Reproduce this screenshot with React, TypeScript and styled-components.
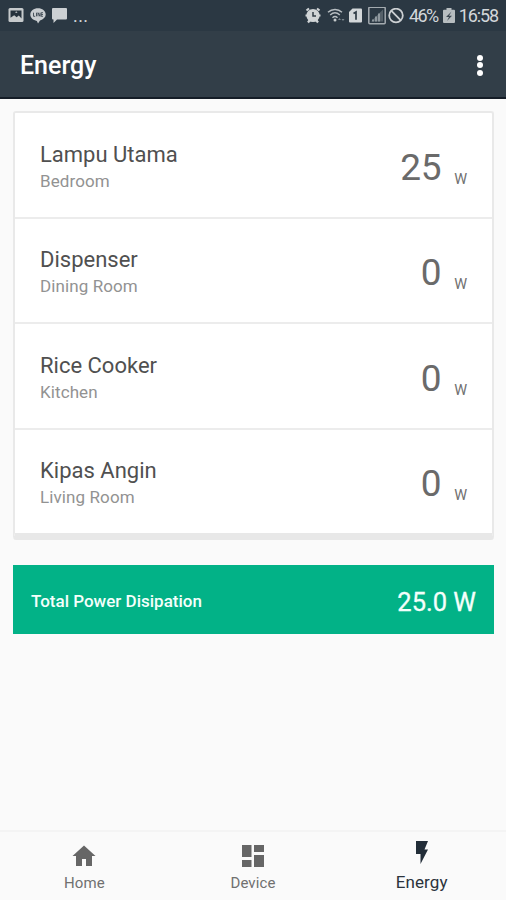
import React from "react";
import styled, { createGlobalStyle } from "styled-components";

const GlobalStyle = createGlobalStyle`
  *, *::before, *::after { box-sizing: border-box; }
  body { margin: 0; font-family: Roboto, "Liberation Sans", sans-serif; background: #fafafa; }
`;

const Screen = styled.div`
  display: flex;
  flex-direction: column;
  width: 506px;
  height: 900px;
  overflow: hidden;
  background: #fafafa;
`;

const StatusBar = styled.div`
  display: flex;
  align-items: center;
  justify-content: space-between;
  height: 31px;
  padding: 0 8px;
  background: #2b3843;
  color: #d3d7da;
`;

const StatusIcon = styled.svg`
  display: block;
  flex: none;
`;

const StatusText = styled.span<{ $spacing: string }>`
  font-size: 18px;
  line-height: 30px;
  letter-spacing: ${(p) => p.$spacing};
  white-space: nowrap;
`;

const AppBar = styled.header`
  display: flex;
  align-items: center;
  justify-content: space-between;
  height: 68px;
  padding: 2px 23px 0 20px;
  background: #323e48;
  border-bottom: 2px solid #151d27;
`;

const Title = styled.h1`
  margin: 0;
  padding-top: 2px;
  font-size: 25px;
  font-weight: 500;
  line-height: 30px;
  color: #fff;
`;

const MenuButton = styled.button`
  display: flex;
  flex-direction: column;
  align-items: center;
  gap: 1.5px;
  padding: 0;
  border: 0;
  background: none;
`;

const Dot = styled.span`
  width: 6px;
  height: 6px;
  border-radius: 50%;
  background: #fff;
`;

const Content = styled.main`
  flex: 1;
  padding: 12px 12px 0 13px;
`;

const Card = styled.section`
  height: 429px;
  border: 2px solid #e9e9e9;
  border-bottom: 7px solid #e8e8e8;
  border-radius: 3px;
  background: #fff;
`;

const Row = styled.div`
  display: flex;
  justify-content: space-between;
  height: 105.5px;
  padding: 27.5px 25px 0;
  border-bottom: 2px solid #ececec;
  &:last-child { height: 103.5px; border-bottom: 0; }
`;

const DeviceName = styled.div`
  font-size: 22px;
  line-height: 28px;
  color: #505050;
`;

const RoomName = styled.div`
  font-size: 17px;
  line-height: 25px;
  letter-spacing: 0.1px;
  color: #929292;
`;

const Reading = styled.div`
  display: flex;
  align-items: baseline;
  gap: 13px;
  color: #6a6a6a;
`;

const Value = styled.span`
  font-size: 37px;
  letter-spacing: -0.4px;
  line-height: 53px;
`;

const Unit = styled.span`
  position: relative;
  top: 4px;
  font-size: 14.5px;
  color: #707070;
`;

const TotalBar = styled.section`
  display: flex;
  align-items: center;
  justify-content: space-between;
  height: 69px;
  margin-top: 25px;
  padding: 2px 18px 0;
  background: #02b287;
  color: #f4fffb;
`;

const TotalLabel = styled.span`
  font-size: 17px;
  font-weight: 500;
`;

const TotalValue = styled.span`
  padding-top: 2px;
  font-size: 25.5px;
  font-weight: 400;
  -webkit-text-stroke: 0.3px #f4fffb;
`;

const NavBar = styled.nav`
  display: grid;
  grid-template-columns: repeat(3, 1fr);
  height: 70px;
  border-top: 2px solid #f4f4f4;
  background: #fafafa;
`;

const NavItem = styled.a<{ $active?: boolean }>`
  display: flex;
  flex-direction: column;
  align-items: center;
  padding-top: ${(p) => (p.$active ? "5px" : "10px")};
  color: ${(p) => (p.$active ? "#2b333c" : "#707070")};
`;

const NavLabel = styled.span<{ $active?: boolean }>`
  margin-top: ${(p) => (p.$active ? "3px" : "1px")};
  font-size: ${(p) => (p.$active ? "17px" : "15px")};
  line-height: 20px;
  letter-spacing: 0.1px;
`;

const StatusGroup = styled.div<{ $gap: string }>`
  display: flex;
  align-items: center;
  gap: ${(p) => p.$gap};
`;

const Spacer = styled.span<{ $w: string }>`
  flex: none;
  width: ${(p) => p.$w};
`;

const readings = [
  { name: "Lampu Utama", room: "Bedroom", value: "25" },
  { name: "Dispenser", room: "Dining Room", value: "0" },
  { name: "Rice Cooker", room: "Kitchen", value: "0" },
  { name: "Kipas Angin", room: "Living Room", value: "0" },
];

function NotificationIcons() {
  return (
    <StatusGroup $gap="6px">
      <StatusIcon width="16" height="16" viewBox="0 0 16 16">
        <rect x=".5" y="0" width="15" height="14" rx="1.5" fill="#c6cacc" />
        <path d="M2.500 2.500h11v8l-2.700-3-2.200 1.800-2.400-2.100-3.700 2.500z" fill="#26323d" />
        <path d="M7 4.500l1.300-1.200L9.600 5z" fill="#c6cacc" />
      </StatusIcon>
      <StatusIcon width="16" height="16" viewBox="0 0 16 16">
        <path d="M8 .2C3.700.2.3 2.900.3 6.600c0 3.200 2.800 5.800 6.600 6.300L8 15.500l2-2.900c3.400-1.100 5.700-3.300 5.700-6C15.700 2.900 12.300.2 8 .2z" fill="#c9cdd0" />
        <path d="M3.500 4.700v3.600h1.700M6.500 4.700v3.600M8 8.300V4.700l2 3.600V4.700M13 4.700h-1.800v3.600H13M11.200 6.500H13" fill="none" stroke="#3b4650" strokeWidth=".9" />
      </StatusIcon>
      <StatusIcon width="15" height="16" viewBox="0 0 15 16">
        <path d="M1 0h13a1 1 0 0 1 1 1v9.500a1 1 0 0 1-1 1H5L1.500 15v-3.500H1a1 1 0 0 1-1-1V1a1 1 0 0 1 1-1z" fill="#ccd0d3" />
      </StatusIcon>
      <StatusText $spacing="0.4px">...</StatusText>
    </StatusGroup>
  );
}

function SystemIcons() {
  return (
    <StatusGroup $gap="0">
      <StatusIcon width="16" height="17" viewBox="0 0 16 17">
        <path d="M1.500 3.500L4 1.500M14.500 3.500L12 1.500M3 15.500l1.500-2M13 15.500l-1.500-2M.5 8.500h2M13.500 8.500h2" stroke="#d0d4d6" strokeWidth="2.200" />
        <circle cx="8" cy="8.500" r="6.600" fill="#d0d4d6" />
        <path d="M8 5v4h3" fill="none" stroke="#303c46" strokeWidth="1.500" />
      </StatusIcon>
      <Spacer $w="6px" />
      <StatusIcon width="19" height="16" viewBox="0 0 19 16">
        <g fill="none" stroke="#b8bec2" strokeWidth="1.500">
          <path d="M1 4.200c4-3.700 10-3.700 14 0M3.200 7c3-2.700 6.600-2.700 9.600 0M5.500 9.700c1.500-1.400 3.500-1.400 5 0" />
        </g>
        <circle cx="8" cy="12" r="1.500" fill="#c5cacc" />
        <path d="M11 12l1.500-2 1.500 2zM14.500 11l1.500 2 1.500-2z" fill="#7c868e" />
      </StatusIcon>
      <Spacer $w="3px" />
      <StatusIcon width="13" height="16" viewBox="0 0 13 16">
        <path d="M3.500 .5H12a1 1 0 0 1 1 1v12a1 1 0 0 1-1 1H1a1 1 0 0 1-1-1V4z" fill="#d3d7d9" />
        <path d="M4.500 5.500l2.500-1.500v7.800" fill="none" stroke="#303c46" strokeWidth="1.700" />
      </StatusIcon>
      <Spacer $w="6px" />
      <StatusIcon width="18" height="18" viewBox="0 0 18 18">
        <rect x=".8" y=".3" width="16.400" height="16.400" rx="1" fill="none" stroke="#a4abb0" strokeWidth="1.500" />
        <path d="M3 14.500L15 2.500v12z" fill="#56616a" />
        <path d="M5 14.500v-2M8 14.500v-5M11 14.500v-8" stroke="#969fa5" strokeWidth="1.800" />
      </StatusIcon>
      <Spacer $w="2px" />
      <StatusIcon width="16" height="16" viewBox="0 0 16 16">
        <g fill="none" stroke="#ccd0d3" strokeWidth="1.800">
          <circle cx="8" cy="7.500" r="6.800" />
          <path d="M3.200 2.700l9.600 9.600" />
        </g>
      </StatusIcon>
      <Spacer $w="5px" />
      <StatusText $spacing="-1.6px">46%</StatusText>
      <Spacer $w="5px" />
      <StatusIcon width="12" height="16" viewBox="0 0 12 16">
        <path d="M3.500 0h5v1.700H11a1 1 0 0 1 1 1V14a1 1 0 0 1-1 1H1a1 1 0 0 1-1-1V2.700a1 1 0 0 1 1-1h2.500z" fill="#b7bdc0" />
        <path d="M8.500 3.500L3 9h3L4 13l5-5.200H6z" fill="#3a4650" />
      </StatusIcon>
      <Spacer $w="4px" />
      <StatusText $spacing="-1.1px">16:58</StatusText>
    </StatusGroup>
  );
}

export default function App() {
  return (
    <Screen>
      <GlobalStyle />
      <StatusBar>
        <NotificationIcons />
        <SystemIcons />
      </StatusBar>
      <AppBar>
        <Title>Energy</Title>
        <MenuButton aria-label="More options">
          <Dot />
          <Dot />
          <Dot />
        </MenuButton>
      </AppBar>
      <Content>
        <Card>
          {readings.map((r) => (
            <Row key={r.name}>
              <div>
                <DeviceName>{r.name}</DeviceName>
                <RoomName>{r.room}</RoomName>
              </div>
              <Reading>
                <Value>{r.value}</Value>
                <Unit>W</Unit>
              </Reading>
            </Row>
          ))}
        </Card>
        <TotalBar>
          <TotalLabel>Total Power Disipation</TotalLabel>
          <TotalValue>25.0 W</TotalValue>
        </TotalBar>
      </Content>
      <NavBar>
        <NavItem>
          <StatusIcon width="24" height="30" viewBox="0 0 24 30">
            <path d="M12 3.500L.5 14H4v10h6v-7h4v7h6V14h3.500z" fill="#666" />
          </StatusIcon>
          <NavLabel>Home</NavLabel>
        </NavItem>
        <NavItem>
          <StatusIcon width="24" height="30" viewBox="0 0 24 30">
            <path d="M1 3h9.500v12H1zM13 3h10v7H13zM1 18h9.500v7H1zM13 13h10v12H13z" fill="#666" />
          </StatusIcon>
          <NavLabel>Device</NavLabel>
        </NavItem>
        <NavItem $active>
          <StatusIcon width="14" height="32" viewBox="0 0 14 32">
            <path d="M1 4h12L9.500 12.500H13L5.500 27V17H1z" fill="#222d38" />
          </StatusIcon>
          <NavLabel $active>Energy</NavLabel>
        </NavItem>
      </NavBar>
    </Screen>
  );
}
